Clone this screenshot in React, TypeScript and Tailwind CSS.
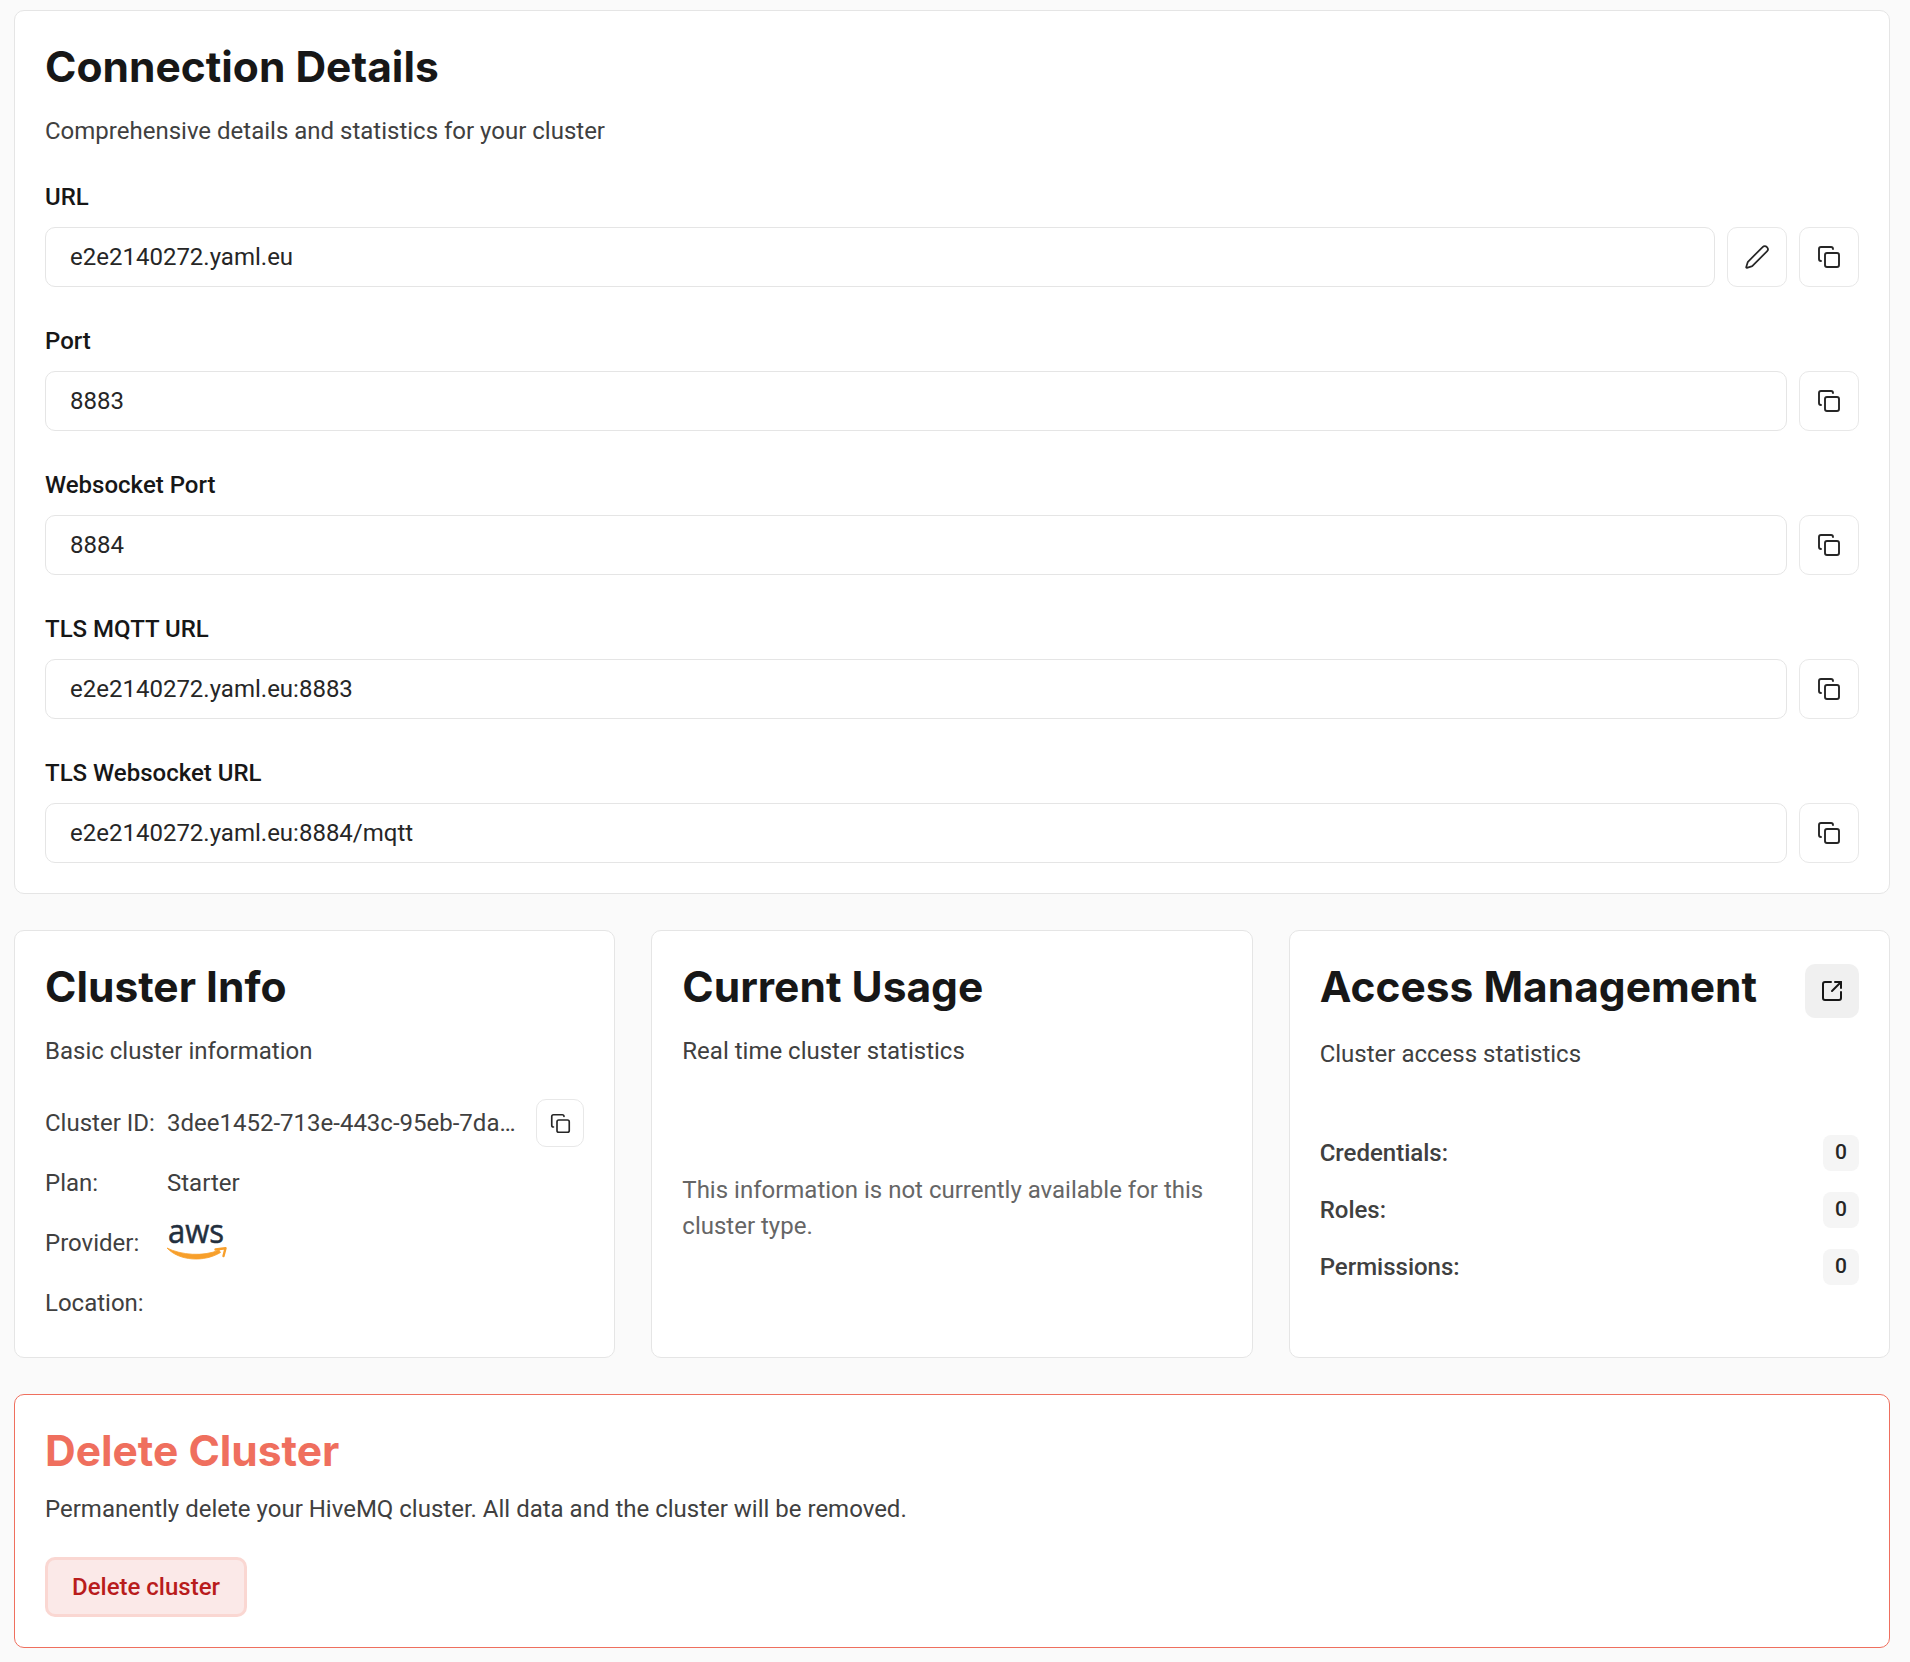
import React from "react";
import { Copy, Pen, SquareArrowOutUpRight } from "lucide-react";

const CONNECTION_FIELDS = [
  { label: "URL", value: "e2e2140272.yaml.eu", editable: true },
  { label: "Port", value: "8883" },
  { label: "Websocket Port", value: "8884" },
  { label: "TLS MQTT URL", value: "e2e2140272.yaml.eu:8883" },
  { label: "TLS Websocket URL", value: "e2e2140272.yaml.eu:8884/mqtt" },
];

const ACCESS_STATS = ["Credentials:", "Roles:", "Permissions:"];

const headingFont = "font-['Inter',sans-serif] font-bold text-[42.5px] leading-[52px]";

function IconButton({ children }: { children: React.ReactNode }) {
  return (
    <button className="flex h-[60px] w-[60px] shrink-0 items-center justify-center rounded-[10px] border border-[#e8e8e8] bg-white text-[#262626]">
      {children}
    </button>
  );
}

function Card({ children }: { children: React.ReactNode }) {
  return <div className="rounded-[10px] border border-[#e5e5e5] bg-white p-[30px]">{children}</div>;
}

function AwsLogo() {
  return (
    <svg width="60" height="34" viewBox="0 0 60 34" className="mb-[2px] overflow-visible">
      <text x="1" y="17.5" fontFamily="'Open Sans', sans-serif" fontSize="32" fontWeight="500" fill="#232f3e" stroke="#232f3e" strokeWidth="0.5" textLength="56" lengthAdjust="spacingAndGlyphs">
        aws
      </text>
      {/* swoosh: thin at the ends, thick in the middle */}
      <path d="M0 23C14 30 36 32 52 25L53.5 27.5C37 37.5 12 36 0 23Z" fill="#f79f2b" stroke="#f79f2b" strokeWidth="0.8" strokeLinejoin="round" />
      <path d="M48.5 24.5L58.5 23.2L56.5 31" fill="none" stroke="#f79f2b" strokeWidth="2.4" strokeLinecap="round" strokeLinejoin="round" />
    </svg>
  );
}

export default function App() {
  return (
    <div className="min-h-screen bg-[#fafafa] pt-[10px] pr-[20px] pb-[14px] pl-[14px] font-['Roboto',sans-serif] text-[24px] leading-[36px] text-[#404040]">
      {/* Connection details */}
      <Card>
        <h2 className={`${headingFont} text-[#171717]`}>Connection Details</h2>
        <p className="mt-[20px] mb-[30px]">Comprehensive details and statistics for your cluster</p>
        <div className="flex flex-col gap-[36px]">
          {CONNECTION_FIELDS.map((field) => (
            <div key={field.label}>
              <label className="mb-[12px] block font-medium text-[#171717]">{field.label}</label>
              <div className="flex gap-[12px]">
                <input
                  readOnly
                  value={field.value}
                  className="h-[60px] min-w-0 flex-1 rounded-[10px] border border-[#e5e5e5] bg-white px-[24px] text-[#262626] outline-none"
                />
                {field.editable && (
                  <IconButton>
                    <Pen size={26} strokeWidth={1.6} />
                  </IconButton>
                )}
                <IconButton>
                  <Copy size={24} strokeWidth={1.9} />
                </IconButton>
              </div>
            </div>
          ))}
        </div>
      </Card>

      <div className="mt-[36px] grid grid-cols-3 gap-[36px]">
        {/* Cluster info */}
        <Card>
          <h2 className={`${headingFont} text-[#171717]`}>Cluster Info</h2>
          <p className="mt-[20px] mb-[30px]">Basic cluster information</p>
          <div className="flex flex-col gap-[12px]">
            <div className="flex h-[48px] items-center">
              <span className="w-[122px] shrink-0">Cluster ID:</span>
              <span className="whitespace-nowrap">3dee1452-713e-443c-95eb-7da…</span>
              <button className="ml-auto flex h-[48px] w-[48px] shrink-0 items-center justify-center rounded-[10px] border border-[#e8e8e8] text-[#262626]">
                <Copy size={21} strokeWidth={1.9} />
              </button>
            </div>
            <div className="flex h-[48px] items-center">
              <span className="w-[122px] shrink-0">Plan:</span>
              <span>Starter</span>
            </div>
            <div className="flex h-[48px] items-center">
              <span className="w-[122px] shrink-0">Provider:</span>
              <AwsLogo />
            </div>
            <div className="flex h-[48px] items-center">
              <span className="w-[122px] shrink-0">Location:</span>
            </div>
          </div>
        </Card>

        {/* Current usage */}
        <Card>
          <h2 className={`${headingFont} text-[#171717]`}>Current Usage</h2>
          <p className="mt-[20px]">Real time cluster statistics</p>
          <p className="mt-[103px] text-[#666666]">
            This information is not currently available for this cluster type.
          </p>
        </Card>

        {/* Access management */}
        <Card>
          <div className="flex items-start justify-between">
            <h2 className={`${headingFont} text-[#171717]`}>Access Management</h2>
            <button className="mt-[3px] flex h-[54px] w-[54px] shrink-0 items-center justify-center rounded-[10px] bg-[#f0f0f0] text-[#171717]">
              <SquareArrowOutUpRight size={24} strokeWidth={2} />
            </button>
          </div>
          <p className="mt-[18px] mb-[63px]">Cluster access statistics</p>
          <div className="flex flex-col gap-[21px]">
            {ACCESS_STATS.map((stat) => (
              <div key={stat} className="flex h-[36px] items-center justify-between">
                <span className="font-medium">{stat}</span>
                <span className="flex h-[36px] w-[36px] items-center justify-center rounded-[8px] bg-[#f5f5f5] pb-[2px] text-[21px] font-medium text-[#262626]">
                  0
                </span>
              </div>
            ))}
          </div>
        </Card>
      </div>

      {/* Delete cluster */}
      <div className="mt-[36px] rounded-[10px] border border-[#ef6f5e] bg-white p-[30px]">
        <h2 className={`${headingFont} text-[#ef6f5e]`}>Delete Cluster</h2>
        <p className="mt-[14px] mb-[30px]">Permanently delete your HiveMQ cluster. All data and the cluster will be removed.</p>
        <button className="h-[60px] w-[202px] rounded-[10px] border-[3px] border-[#fad7d2] bg-[#fbe9e8] font-medium text-[#b91c1c]">
          Delete cluster
        </button>
      </div>
    </div>
  );
}
